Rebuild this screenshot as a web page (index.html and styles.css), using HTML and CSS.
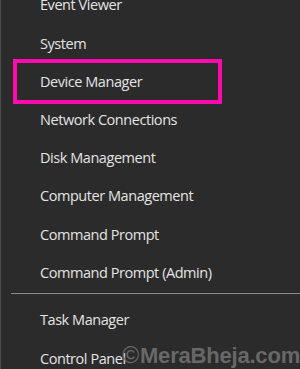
FILE: index.html
```html
<!DOCTYPE html>
<html lang="en">
<head>
    <meta charset="UTF-8">
    <meta name="viewport" content="width=device-width, initial-scale=1.0">
    <title>Quick Link Menu</title>
    <link rel="stylesheet" href="styles.css">
</head>
<body>
    <div class="menu">
        <div class="item">Event Viewer</div>
        <div class="item">System</div>
        <div class="item marked">Device Manager</div>
        <div class="item">Network Connections</div>
        <div class="item">Disk Management</div>
        <div class="item">Computer Management</div>
        <div class="item">Command Prompt</div>
        <div class="item">Command Prompt (Admin)</div>
        <div class="separator"></div>
        <div class="item">Task Manager</div>
        <div class="item">Control Panel</div>
    </div>
    <div class="watermark"><span class="copy">&copy;</span>MeraBheja.com</div>
</body>
</html>
```
FILE: styles.css
```css
html, body {
    margin: 0;
    height: 100%;
    overflow: hidden;
}
body {
    font-family: "Open Sans", "Noto Sans", sans-serif;
    background: #2b2b2b;
    color: #e4e4e4;
    border-left: 1px solid #4d4d4d;
    position: relative;
}
.menu {
    display: flex;
    flex-direction: column;
    margin-top: -13.6px;
}
.item {
    height: 38.2px;
    line-height: 38.2px;
    padding-left: 39px;
    font-size: 14.5px;
    letter-spacing: -0.45px;
    white-space: nowrap;
    position: relative;
}
.item.marked::after {
    content: "";
    position: absolute;
    left: 12px;
    top: -4px;
    width: 201px;
    height: 37px;
    border: 4px solid #ff0aad;
}
.separator {
    height: 1px;
    background: #8a8a8a;
    margin: 1px 0 7.5px 10px;
}
.watermark {
    position: absolute;
    right: 0;
    bottom: 0;
    font-family: "Liberation Sans", Arial, sans-serif;
    font-weight: bold;
    font-size: 22px;
    letter-spacing: -0.2px;
    color: #686868;
    white-space: nowrap;
}
.copy {
    font-weight: normal;
    font-size: 23px;
    margin-right: 1px;
}
```
